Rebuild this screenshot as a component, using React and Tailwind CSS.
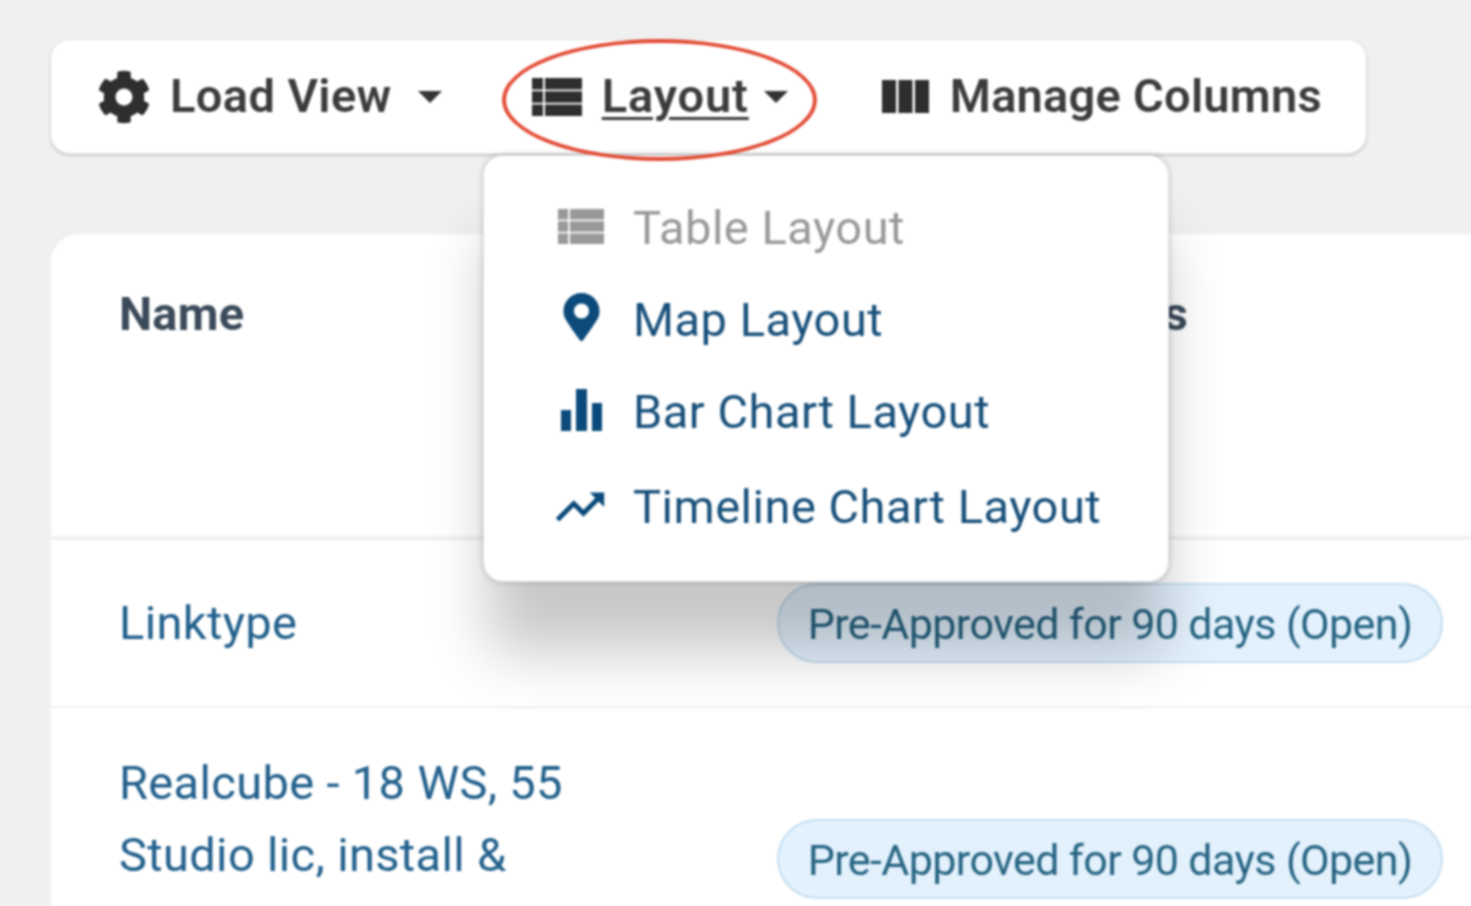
import React from 'react';
import { FaCog, FaMapMarkerAlt } from 'react-icons/fa';
import { MdTrendingUp } from 'react-icons/md';

const font = { fontFamily: 'Roboto, sans-serif' };

const Caret = ({ className = '' }) => (
  <span className={`inline-block w-0 h-0 border-x-[12px] border-x-transparent border-t-[12px] border-t-[#333] ${className}`} />
);

const ListIcon = ({ className = '' }) => (
  <svg viewBox="0 0 50 38" fill="currentColor" className={className}>
    <rect x="0" y="0" width="11" height="11.5" />
    <rect x="13" y="0" width="37" height="11.5" />
    <rect x="0" y="13.25" width="11" height="11.5" />
    <rect x="13" y="13.25" width="37" height="11.5" />
    <rect x="0" y="26.5" width="11" height="11.5" />
    <rect x="13" y="26.5" width="37" height="11.5" />
  </svg>
);

const ColumnsIcon = ({ className = '' }) => (
  <svg viewBox="0 0 47 33" fill="currentColor" className={className}>
    <rect x="0" y="0" width="14" height="33" />
    <rect x="16.5" y="0" width="14" height="33" />
    <rect x="33" y="0" width="14" height="33" />
  </svg>
);

const BarsIcon = ({ className = '' }) => (
  <svg viewBox="0 0 42 42" fill="currentColor" className={className}>
    <rect x="0" y="21" width="10" height="21" />
    <rect x="15" y="0" width="11" height="42" />
    <rect x="31" y="14" width="10" height="28" />
  </svg>
);

const ToolbarButton = ({ icon: Icon, label, underline, iconClass, labelClass = '', children }) => (
  <div className="flex items-center">
    <Icon className={`text-[#2e2e2e] shrink-0 ${iconClass}`} />
    <span className={`text-[47px] font-semibold leading-none text-[#3c3c3c] -mt-[2px] ${underline ? 'underline underline-offset-[5px] decoration-[3px]' : ''} ${labelClass}`}>
      {label}
    </span>
    {children}
  </div>
);

const menuItems = [
  { icon: ListIcon, label: 'Table Layout', disabled: true, row: 'h-[93px]', iconClass: 'w-[48px] h-[35px] mr-[28px] -ml-[2px] -mt-[4px]' },
  { icon: FaMapMarkerAlt, label: 'Map Layout', row: 'h-[91px]', iconClass: 'w-[37px] h-[48px] mr-[33px] ml-[4px] -mt-[8px]' },
  { icon: BarsIcon, label: 'Bar Chart Layout', row: 'h-[92px]', iconClass: 'w-[42px] h-[42px] mr-[30px] ml-[2px] -mt-[4px]' },
  { icon: MdTrendingUp, label: 'Timeline Chart Layout', row: 'h-[98px]', iconClass: 'w-[58px] h-[58px] mr-[24px] -ml-[8px]' },
];

const Pill = () => (
  <span className="flex items-center justify-center w-[666px] h-[80px] pt-[2px] rounded-[40px] border-2 border-[#c5deef] bg-[#e3f1fd] text-[43px] tracking-[-0.6px] text-[#266482] whitespace-nowrap">
    Pre-Approved for 90 days (Open)
  </span>
);

export default function App() {
  return (
    <div className="h-[906px] overflow-hidden bg-[#f0f0f0]" style={font}>
      <div className="relative w-[1500px] h-[930px] pt-[39px] pl-[50px] blur-[0.8px]">
        {/* Toolbar */}
        <div className="flex items-center w-[1317px] h-[115px] rounded-[20px] bg-white border border-[#e2e2e2] shadow-[0_2px_3px_rgba(0,0,0,0.15)] pl-[46px]">
          <ToolbarButton icon={FaCog} label="Load View" iconClass="w-[54px] h-[54px] mr-[19px]" labelClass="tracking-[0.4px]">
            <Caret className="ml-[26px]" />
          </ToolbarButton>
          <div className="ml-[90px]">
            <ToolbarButton icon={ListIcon} label="Layout" underline iconClass="w-[50px] h-[38px] mr-[20px]" labelClass="tracking-[0.85px]">
              <Caret className="ml-[15px]" />
            </ToolbarButton>
          </div>
          <div className="ml-[94px]">
            <ToolbarButton icon={ColumnsIcon} label="Manage Columns" iconClass="w-[47px] h-[33px] mr-[21px]" labelClass="tracking-[0.25px]" />
          </div>
        </div>

        {/* Table card */}
        <div className="mt-[80px] ml-px h-[700px] rounded-tl-[28px] bg-white text-[47px] tracking-[0.35px]">
          <div className="flex h-[306px] pl-[68px] pt-[52px] border-b-4 border-[#f0f0f0]">
            <div className="w-[589px] font-bold text-[47px] tracking-[0.2px] leading-[56px] text-[#3b4a5a]">Name</div>
            <div className="w-[480px] text-right font-bold text-[47px] tracking-[0.2px] leading-[56px] text-[#3b4a5a]">Status</div>
          </div>
          <div className="flex items-center h-[168px] pl-[68px] border-b-2 border-[#f0f0f0]">
            <div className="w-[658px] text-[#22608c]">Linktype</div>
            <Pill />
          </div>
          <div className="flex items-start pl-[68px] pt-[39px]">
            <div className="w-[658px] leading-[72px] text-[#22608c]">Realcube - 18 WS, 55<br />Studio lic, install &amp;</div>
            <div className="pt-[72px]"><Pill /></div>
          </div>
        </div>

        {/* Dropdown */}
        <div className="absolute left-[483px] top-[155px] w-[686px] h-[427px] rounded-[20px] bg-white border border-[#e0e0e0] shadow-[0_75px_60px_-5px_rgba(0,0,0,0.22),0_0_6px_rgba(0,0,0,0.2)] pt-[26px] pl-[75px]">
          {menuItems.map((item) => (
            <div key={item.label} className={`flex items-center ${item.row} ${item.disabled ? 'text-[#999]' : 'text-[#174f7a]'}`}>
              <item.icon className={`shrink-0 ${item.iconClass} ${item.disabled ? 'text-[#999]' : 'text-[#0b4a7a]'}`} />
              <span className="text-[47px] tracking-[0.5px] whitespace-nowrap">{item.label}</span>
            </div>
          ))}
        </div>

        {/* Annotation */}
        <div className="absolute left-[502px] top-[39px] w-[315px] h-[122px] rounded-[50%] border-[4px] border-[#e24c36]" />
      </div>
    </div>
  );
}
